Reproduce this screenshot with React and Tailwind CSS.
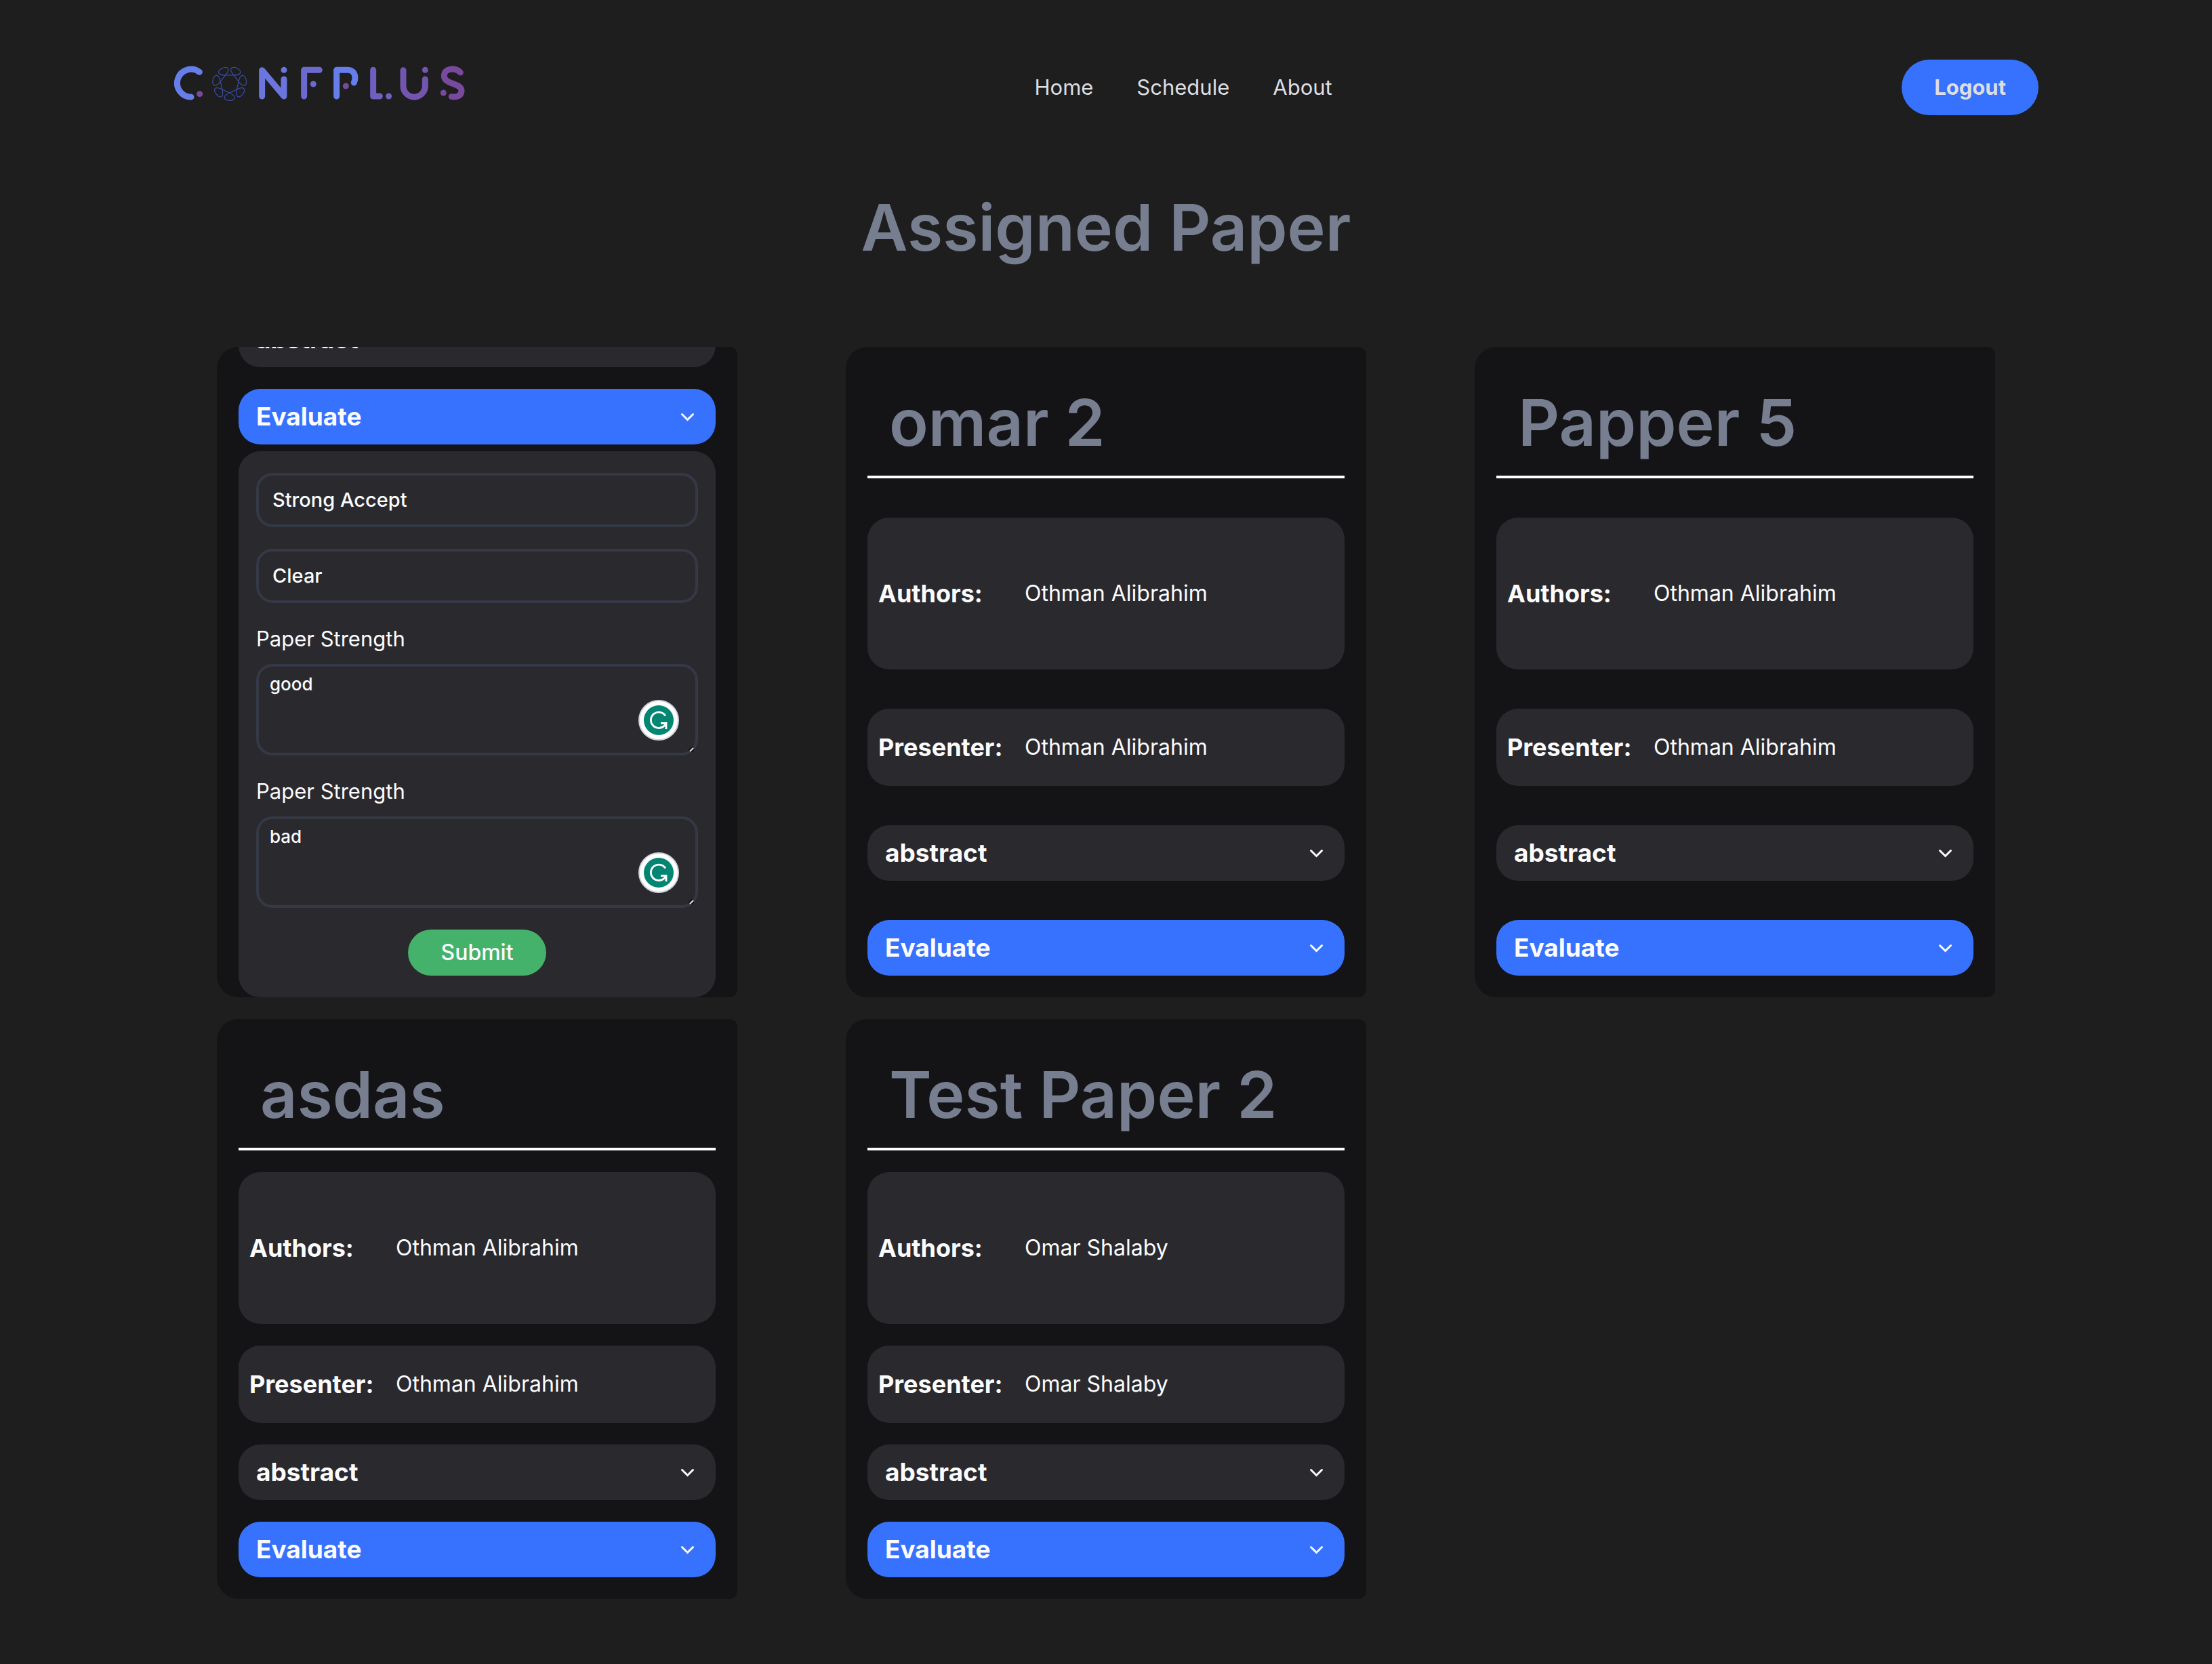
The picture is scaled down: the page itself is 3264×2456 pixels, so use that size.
import { useId } from "react";

const papers = [
  { title: "omar 2", authors: "Othman Alibrahim", presenter: "Othman Alibrahim" },
  { title: "Papper 5", authors: "Othman Alibrahim", presenter: "Othman Alibrahim" },
  { title: "asdas", authors: "Othman Alibrahim", presenter: "Othman Alibrahim" },
  { title: "Test Paper 2", authors: "Omar Shalaby", presenter: "Omar Shalaby" },
];

const petals = [0, 1, 2, 3, 4, 5, 6];

function Logo() {
  return (
    <svg
      viewBox="48 52 1290 156"
      className="mb-3 h-[52px] w-[430px]"
      fill="none"
      strokeWidth="27"
      strokeLinecap="round"
      strokeLinejoin="round"
      role="img"
      aria-label="ConfPlus"
    >
      <path d="M163 80A61.5 61.5 0 1 0 126 190.5" stroke="#667eea" />
      <circle cx="164" cy="177" r="13.5" fill="#774a9e" />
      <g transform="translate(296 131) scale(3)" stroke="#3a4ba6" strokeWidth="1.2">
        {petals.map((i) => (
          <path
            key={i}
            transform={`rotate(${180 + (i * 360) / 7})`}
            d="M-5.4-11.3C-2.5-12.7 7.5-16 7.5-20.5C7.5-24 4-25 0-25C-4-25-7.5-24-7.5-20.5C-7.5-16 2.5-12.7 5.4-11.3"
          />
        ))}
      </g>
      <path d="M440 187V72L537 187V112" stroke="#6a75de" />
      <circle cx="537" cy="71" r="13.5" fill="#6a75de" />
      <path d="M626 187V71H694" stroke="#6c6acf" />
      <circle cx="667" cy="133" r="13.5" fill="#6c6acf" />
      <path d="M770 187V71H818C850 71 858 100 847 127" stroke="#667eea" />
      <circle cx="811" cy="142" r="13.5" fill="#774a9e" />
      <path d="M932 71V187H961" stroke="#705fc1" />
      <circle cx="1001" cy="187" r="13.5" fill="#705fc1" />
      <path d="M1065 72V142a48.5 48.5 0 0 0 97 0V112" stroke="#7355b0" />
      <circle cx="1162" cy="71" r="13.5" fill="#7355b0" />
      <path d="M1318 82C1295 58 1246 62 1246 97C1246 137 1325 126 1323 165C1321 188 1300 192 1279 189" stroke="#774a9e" />
      <circle cx="1243" cy="172" r="13.5" fill="#774a9e" />
    </svg>
  );
}

function Chevron() {
  return (
    <svg viewBox="0 0 36 36" className="size-9" fill="none" stroke="currentColor" strokeWidth="3" strokeLinecap="round" aria-hidden="true">
      <path d="M12.5 14.5L20.5 22.5L28.5 14.5" strokeLinejoin="miter" />
    </svg>
  );
}

function AbstractBar() {
  return (
    <button type="button" className="flex h-[82px] w-full shrink-0 items-center justify-between rounded-4xl bg-[#2a292e] px-[26px] text-[37px] font-bold">
      abstract
      <Chevron />
    </button>
  );
}

function EvaluateBar({ open }) {
  return (
    <button
      type="button"
      aria-expanded={open}
      className="flex h-[82px] w-full shrink-0 items-center justify-between rounded-4xl bg-[#3772ff] px-[26px] text-[37px] font-bold text-[#fcfcfd]"
    >
      Evaluate
      <Chevron />
    </button>
  );
}

function PaperCard({ paper }) {
  return (
    <article className="flex flex-col justify-between gap-8 rounded-l-4xl rounded-r-xl bg-[#141416] p-8">
      <h2 className="flex h-[162px] items-center border-b-4 border-white px-8 text-[95px] leading-none font-semibold text-[#777e90]">
        {paper.title}
      </h2>
      <div className="flex h-56 items-center rounded-4xl bg-[#2a292e] px-4">
        <h3 className="w-[216px] text-4xl font-bold">Authors:</h3>
        <p className="text-[32px]">{paper.authors}</p>
      </div>
      <div className="flex h-[114px] items-center rounded-4xl bg-[#2a292e] px-4">
        <h3 className="w-[216px] text-4xl font-bold">Presenter:</h3>
        <p className="text-[32px]">{paper.presenter}</p>
      </div>
      <AbstractBar />
      <EvaluateBar open={false} />
    </article>
  );
}

function AssistantBadge() {
  return (
    <svg viewBox="0 0 60 60" className="absolute right-7 bottom-[22px] size-[60px]" fill="none" aria-hidden="true">
      <circle cx="30" cy="30" r="29" fill="#ffffff" stroke="#cfd1dd" strokeWidth="2" />
      <circle cx="30" cy="30" r="22" fill="#038573" />
      <path d="M40 23.5A11.7 11.7 0 1 0 38.5 38L41 35" stroke="#ffffff" strokeWidth="2.8" />
      <path d="M33 34.5H41V43" stroke="#ffffff" strokeWidth="2.8" />
    </svg>
  );
}

function ResizeGrip() {
  return (
    <svg viewBox="0 0 8 8" className="absolute right-[6px] bottom-[5px] size-2" fill="none" aria-hidden="true">
      <path d="M0 6L6 0M4 8L8 4" stroke="#0b0b14" strokeWidth="2" />
      <path d="M2 7L7 2" stroke="#d4d4d4" strokeWidth="2.4" />
    </svg>
  );
}

function Choice({ label, value }) {
  return (
    <select
      aria-label={label}
      className="mb-8 block h-20 w-full appearance-none rounded-3xl border-4 border-[#353945] bg-transparent px-5 text-[29px] font-medium"
      defaultValue={value}
    >
      <option>{value}</option>
    </select>
  );
}

function Comment({ value }) {
  const id = useId();
  return (
    <div className="mb-8">
      <label htmlFor={id} className="mb-4 block text-[31px] leading-[42px]">
        Paper Strength
      </label>
      <div className="relative">
        <textarea
          id={id}
          defaultValue={value}
          className="block h-[135px] w-full resize-none rounded-3xl border-4 border-[#353945] bg-transparent px-4 py-2 text-[26px] leading-9 font-medium"
        />
        <AssistantBadge />
        <ResizeGrip />
      </div>
    </div>
  );
}

function EvaluationCard() {
  return (
    <article className="flex h-[960px] flex-col justify-end overflow-hidden rounded-l-4xl rounded-r-xl bg-[#141416] px-8">
      <AbstractBar />
      <div className="h-8 shrink-0" />
      <EvaluateBar open />
      <form className="mt-[10px] shrink-0 rounded-4xl bg-[#2a292e] px-[26px] py-8" onSubmit={(e) => e.preventDefault()}>
        <Choice label="Recommendation" value="Strong Accept" />
        <Choice label="Clarity" value="Clear" />
        <Comment value="good" />
        <Comment value="bad" />
        <button type="submit" className="mx-auto block h-[68px] rounded-full bg-[#45b26b] px-12 text-[32px] font-medium">
          Submit
        </button>
      </form>
    </article>
  );
}

export default function App() {
  return (
    <div className="min-h-screen bg-[#1e1e1e] pt-[88px] pb-24 font-['Inter',sans-serif] text-[#fcfcfd]">
      <header className="flex h-[82px] items-center justify-between px-64">
        <a href="#home">
          <Logo />
        </a>
        <nav>
          <ul className="flex gap-16 text-[31px] text-[#dddee2]">
            <li><a href="#home">Home</a></li>
            <li><a href="#schedule">Schedule</a></li>
            <li><a href="#about">About</a></li>
          </ul>
        </nav>
        <button type="button" className="h-[82px] rounded-full bg-[#3772ff] px-12 text-[31px] font-bold text-[#dddee2]">
          Logout
        </button>
      </header>
      <main className="px-80">
        <h1 className="mt-[118px] mb-32 text-center text-[95px] leading-24 font-semibold text-[#777e90]">Assigned Paper</h1>
        <div className="grid grid-cols-3 gap-x-40 gap-y-8">
          <EvaluationCard />
          {papers.map((paper) => (
            <PaperCard key={paper.title} paper={paper} />
          ))}
        </div>
      </main>
    </div>
  );
}
